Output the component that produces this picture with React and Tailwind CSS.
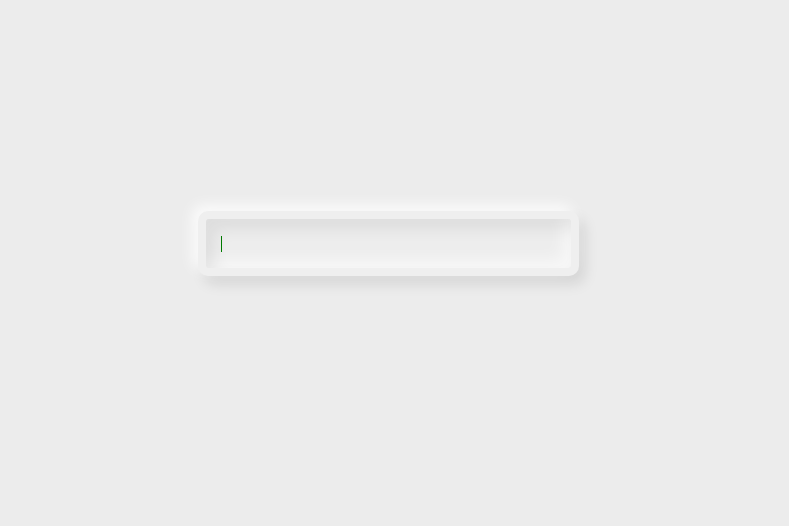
import React, { useEffect, useRef, useState } from 'react';

// Soft "neumorphic" text field on a light grey page
export default function App() {
  const inputRef = useRef(null);
  const [value, setValue] = useState('');

  useEffect(() => {
    inputRef.current?.focus();
  }, []);

  return (
    <div className="min-h-[526px] w-full bg-[#ececec] pl-[198px] pt-[211px]">
      <div className="w-[381px] rounded-[10px] bg-[#efefef] p-2 shadow-[-6px_-6px_14px_rgba(255,255,255,0.8),6px_8px_14px_rgba(0,0,0,0.1)]">
        <div className="relative">
          <input
            ref={inputRef}
            type="text"
            autoFocus
            value={value}
            onChange={(e) => setValue(e.target.value)}
            className="block h-[49px] w-full rounded-[3px] bg-[#ededed] px-[15px] font-['Liberation_Sans',sans-serif] text-base text-[#333] caret-[#008000] outline-none shadow-[inset_8px_10px_16px_rgba(0,0,0,0.07),inset_-8px_-8px_16px_rgba(255,255,255,0.6)]"
          />
          {/* green caret marker while the field is empty */}
          {!value && (
            <span className="pointer-events-none absolute left-[15px] top-[17px] h-4 w-px bg-[#007a00]" />
          )}
        </div>
      </div>
    </div>
  );
}
